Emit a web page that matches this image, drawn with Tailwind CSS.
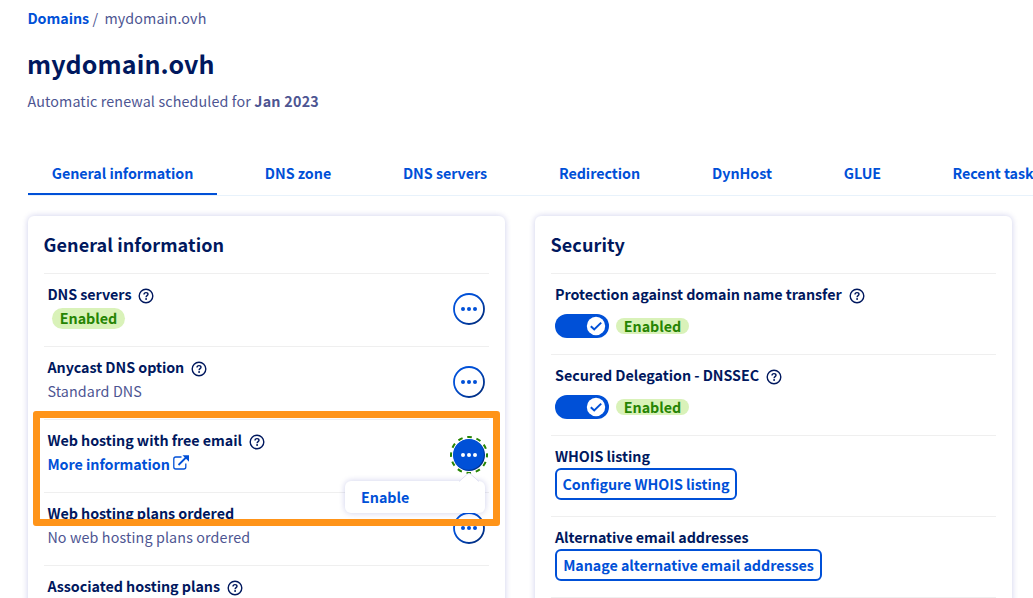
<!DOCTYPE html>
<html lang="en">
<head>
<meta charset="utf-8">
<title>mydomain.ovh</title>
<script src="https://cdn.jsdelivr.net/npm/@tailwindcss/browser@4"></script>
</head>
<body class="w-[1033px] h-[598px] overflow-hidden bg-white font-['Noto_Sans_CJK_JP','Noto_Sans_CJK_SC',sans-serif] text-[14.3px] leading-6 tracking-[-0.04px] text-[#4d5592] whitespace-nowrap">
<svg class="absolute size-0">
  <defs><linearGradient id="ring" x1="0" y1="0" x2="1" y2="1"><stop offset=".35" stop-color="#0050d7"/><stop offset=".85" stop-color="#002f86"/></linearGradient></defs>
  <symbol id="help" viewBox="0 0 16 16"><circle cx="8" cy="8" r="6.800" fill="none" stroke="currentColor" stroke-width="1.400"/><path d="M6 6.500C6 5.200 6.900 4.600 8 4.600s2 .6 2 1.700c0 1.300-1.900 1.400-1.900 2.900" fill="none" stroke="currentColor" stroke-width="1.400"/><circle cx="8.100" cy="11" r=".95" fill="currentColor"/></symbol>
  <symbol id="more" viewBox="0 0 32 32"><circle cx="16" cy="16" r="15" fill="#fff" stroke="url(#ring)" stroke-width="1.800"/><g fill="#0050d7"><circle cx="10" cy="16" r="2"/><circle cx="16" cy="16" r="2"/><circle cx="22" cy="16" r="2"/></g></symbol>
</svg>
<main class="relative w-[1033px] h-[598px] overflow-hidden pl-7 pt-[6px]">
  <nav class="-ml-[0.6px] flex h-6"><b class="w-[65px] text-[#0050d7]">Domains</b><span class="w-3">/</span><span class="tracking-[0.12px]">mydomain.ovh</span></nav>
  <h1 class="mt-[17px] h-8 text-[25px] leading-8 tracking-[0.13px] -ml-px font-bold text-[#00185e]">mydomain.ovh</h1>
  <p class="mt-[10px] h-6 -ml-[0.6px] tracking-[0.13px]">Automatic renewal scheduled for <b class="tracking-[0.25px]">Jan 2023</b></p>
  <nav class="mt-[40px] h-[43px] flex gap-6 border-b border-[#e8f2fb] font-bold text-[#0050d7] text-center leading-10">
    <a class="w-[189px] h-[42px] shrink-0 border-b-2 border-[#0050d7]">General information</a>
    <a class="w-[114px] shrink-0">DNS zone</a>
    <a class="w-[132px] shrink-0">DNS servers</a>
    <a class="w-[129px] shrink-0">Redirection</a>
    <a class="w-[108px] shrink-0">DynHost</a>
    <a class="w-[85px] shrink-0">GLUE</a>
    <a class="shrink-0 pl-[23.500px]">Recent tasks</a>
  </nav>
  <div class="mt-5 flex gap-[30px] text-[#00185e]">
    <section class="w-[477px] h-[430px] rounded-md px-4 shadow-[0_0_6px_rgba(0,14,156,0.2)]">
      <h2 class="h-[57px] leading-[56px] text-[18px] tracking-[0.08px] -ml-[0.5px] font-bold">General information</h2>
      <div class="h-[73px] border-t border-[#efefef] flex justify-between pl-[3.4px] pr-1 pt-[8px]">
        <div><div class="h-6 flex items-center gap-[7px] font-bold"><span>DNS servers</span><svg class="size-4 mt-[3px]"><use href="#help"/></svg></div>
        <div class="ml-[4.6px] mt-[2px] h-[21px] w-[73px] rounded-full bg-[#d9f2b9] text-center leading-[19px] font-bold text-[#268403]">Enabled</div></div>
        <svg class="size-8 mt-[11px]"><use href="#more"/></svg>
      </div>
      <div class="h-[73px] border-t border-[#efefef] flex justify-between pl-[3.4px] pr-1 pt-[8px]">
        <div><div class="h-6 flex items-center gap-[7px] font-bold"><span>Anycast DNS option</span><svg class="size-4 mt-[3px]"><use href="#help"/></svg></div>
        <div class="text-[#4d5592] tracking-[0.13px]">Standard DNS</div></div>
        <svg class="size-8 mt-[11px]"><use href="#more"/></svg>
      </div>
      <div class="h-[73px] border-t border-[#efefef] flex justify-between pl-[3.4px] pr-1 pt-[8px]">
        <div><div class="h-6 flex items-center gap-[7px] font-bold"><span>Web hosting with free email</span><svg class="size-4 mt-[3px]"><use href="#help"/></svg></div>
        <div class="flex items-center gap-[3px] font-bold text-[#0050d7]"><span>More information</span><svg class="size-4 -mt-[2px]" viewBox="0 0 16 16" fill="none" stroke="currentColor"><path d="M8.500 2H2.800C1.600 2 .8 2.800.8 4v8c0 1.200.8 2 2 2h8c1.200 0 2-.8 2-2V8.500" stroke-width="1.300"/><path d="M5.500 10 14 1.500" stroke-width="1.800"/><path d="M9.500.200H16v6.500Z" fill="currentColor" stroke="none"/></svg></div></div>
        <svg class="size-[38px] mt-[8px] -mr-[3px]" viewBox="0 0 38 38"><circle cx="19" cy="19" r="18" fill="none" stroke="#268403" stroke-width="2" stroke-dasharray="4.700 4.725" stroke-dashoffset="2.350"/><circle cx="19" cy="19" r="16" fill="url(#ring)"/><circle cx="18.600" cy="18.600" r="15.200" fill="#0050d7"/><g fill="#fff"><circle cx="13" cy="19" r="2"/><circle cx="19" cy="19" r="2"/><circle cx="25" cy="19" r="2"/></g></svg>
      </div>
      <div class="h-[73px] border-t border-[#efefef] flex justify-between pl-[3.4px] pr-1 pt-[8px]">
        <div><div class="h-6 font-bold">Web hosting plans ordered</div>
        <div class="text-[#4d5592] tracking-[0.13px]">No web hosting plans ordered</div></div>
        <svg class="size-8 mt-[11px]"><use href="#more"/></svg>
      </div>
      <div class="h-[73px] border-t border-[#efefef] pl-[3.4px] pt-[8px]">
        <div class="h-6 flex items-center gap-[7px] font-bold"><span>Associated hosting plans</span><svg class="size-4 mt-[3px]"><use href="#help"/></svg></div>
      </div>
    </section>
    <section class="w-[477px] h-[430px] rounded-md px-4 shadow-[0_0_6px_rgba(0,14,156,0.2)]">
      <h2 class="h-[57px] leading-[56px] text-[18px] tracking-[0.08px] -ml-[0.5px] font-bold">Security</h2>
      <div class="h-[81px] border-t border-[#efefef] pl-1 pt-[8px]">
        <div class="h-6 flex items-center gap-[7px] font-bold"><span>Protection against domain name transfer</span><svg class="size-4 mt-[3px]"><use href="#help"/></svg></div>
        <div class="mt-[8px] flex items-center gap-[7px]"><svg class="w-[54px] h-6" viewBox="0 0 54 24"><rect width="54" height="24" rx="12" fill="#0050d7"/><circle cx="41" cy="12" r="9.200" fill="#fff"/><path d="m35.800 12.200 3.400 3.200 7-6.800" fill="none" stroke="#0050d7" stroke-width="2"/></svg><span class="h-4 w-[73px] rounded-full bg-[#d9f2b9] text-center leading-4 font-bold text-[#268403]">Enabled</span></div>
      </div>
      <div class="h-[81px] border-t border-[#efefef] pl-1 pt-[8px]">
        <div class="h-6 flex items-center gap-[7px] font-bold"><span>Secured Delegation - DNSSEC</span><svg class="size-4 mt-[3px]"><use href="#help"/></svg></div>
        <div class="mt-[8px] flex items-center gap-[7px]"><svg class="w-[54px] h-6" viewBox="0 0 54 24"><rect width="54" height="24" rx="12" fill="#0050d7"/><circle cx="41" cy="12" r="9.200" fill="#fff"/><path d="m35.800 12.200 3.400 3.200 7-6.800" fill="none" stroke="#0050d7" stroke-width="2"/></svg><span class="h-4 w-[73px] rounded-full bg-[#d9f2b9] text-center leading-4 font-bold text-[#268403]">Enabled</span></div>
      </div>
      <div class="h-[81px] border-t border-[#efefef] pl-1 pt-[8px] font-bold">
        <div class="h-6">WHOIS listing</div>
        <button class="block w-[182px] h-8 rounded-md border-2 border-[#0050d7] leading-7 text-[#0050d7]">Configure WHOIS listing</button>
      </div>
      <div class="h-[81px] border-t border-[#efefef] pl-1 pt-[8px] font-bold">
        <div class="h-6">Alternative email addresses</div>
        <button class="block w-[267px] h-8 rounded-md border-2 border-[#0050d7] leading-7 text-[#0050d7]">Manage alternative email addresses</button>
      </div>
      <div class="border-t border-[#efefef]"></div>
    </section>
  </div>
  <div class="absolute left-[345px] top-[481px] w-[140px] h-8 rounded-md bg-white pl-4 leading-8 font-bold text-[#0050d7] shadow-[0_0_6px_rgba(0,14,156,0.2)]">Enable
    <svg class="absolute left-[114px] -top-2 w-5 h-[9px]" viewBox="0 0 20 9"><path d="M0 9 10 0l10 9Z" fill="#fff"/><path d="M0 8.500 8.500 1Q10 0 11.500 1L20 8.500" fill="none" stroke="#dfe0f2"/></svg>
  </div>
  <div class="absolute left-[33px] top-[411px] w-[467px] h-[115px] rounded-[3px] border-7 border-[#ff9419]"></div>
</main>
</body>
</html>
